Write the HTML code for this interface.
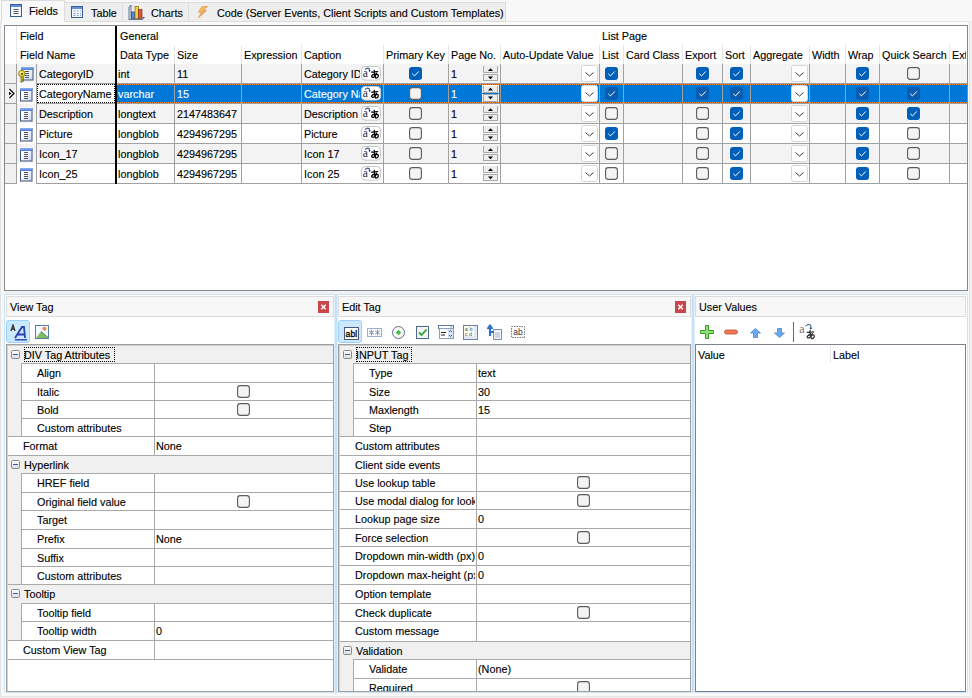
<!DOCTYPE html><html><head><meta charset="utf-8"><style>
html,body{margin:0;padding:0;}
body{width:972px;height:698px;position:relative;overflow:hidden;background:#f0f0f0;font-family:"Liberation Sans", sans-serif;}
.a{position:absolute;}
.t{white-space:nowrap;-webkit-text-stroke:0.12px currentColor;}
</style></head><body>
<div class="a" style="left:0px;top:0px;width:972px;height:21px;background:#f8f8f8;"></div>
<div class="a" style="left:0px;top:21px;width:970px;height:1px;background:#e4e4e4;"></div>
<div class="a" style="left:1px;top:22px;width:968px;height:3px;background:#fbfbfb;"></div>
<div class="a" style="left:1px;top:0px;width:64px;height:22px;background:#f9f9f9;box-sizing:border-box;border:1px solid #dcdcdc;border-bottom:none;"></div>
<div class="a" style="left:65px;top:2px;width:58px;height:20px;background:#eeeeee;box-sizing:border-box;border:1px solid #dcdcdc;border-left:none;border-bottom:none;"></div>
<div class="a" style="left:123px;top:2px;width:66px;height:20px;background:#eeeeee;box-sizing:border-box;border:1px solid #dcdcdc;border-left:none;border-bottom:none;"></div>
<div class="a" style="left:189px;top:2px;width:317px;height:20px;background:#eeeeee;box-sizing:border-box;border:1px solid #dcdcdc;border-left:none;border-bottom:none;"></div>
<div class="a" style="left:65px;top:21px;width:441px;height:1px;background:#dcdcdc;"></div>
<svg class="a" style="left:10px;top:4px" width="12" height="13" viewBox="0 0 12 13"><rect x="0.5" y="0.5" width="11" height="12" fill="#f4f7fd" stroke="#3c5a8e"/><rect x="1" y="1" width="10" height="2" fill="#5f8fe0"/><path d="M3.5 5.5H8.5M3.5 7.5H8.5M3.5 9.5H8.5" stroke="#555"/></svg>
<div class="a t" style="left:29px;top:4.76px;line-height:13px;font-size:10.8px;color:#000;">Fields</div>
<svg class="a" style="left:71px;top:6px" width="12" height="12" viewBox="0 0 12 12"><rect x="0.5" y="0.5" width="11" height="11" fill="#f4f7fd" stroke="#3c5a8e"/><rect x="1" y="1" width="10" height="2" fill="#5f8fe0"/><path d="M2.5 5H4.5M6 5H7.5M9 5H10M2.5 7.5H4.5M6 7.5H7.5M9 7.5H10M2.5 9.5H4.5M6 9.5H7.5M9 9.5H10" stroke="#7a9ad0"/></svg>
<div class="a t" style="left:91px;top:6.76px;line-height:13px;font-size:10.8px;color:#000;">Table</div>
<svg class="a" style="left:128px;top:4px" width="18" height="17" viewBox="0 0 18 17"><path d="M1 15.5 L3 13.5 H16.5 L14.5 15.5Z" fill="#dfe6f2" stroke="#3c5478" stroke-width="0.8"/><path d="M1 15.5 V3 L3 1 V13.5" fill="#e8eef8" stroke="#3c5478" stroke-width="0.8"/><rect x="3.5" y="8" width="3.5" height="6.5" fill="#4f86d8" stroke="#23457a" stroke-width="0.7"/><rect x="7" y="2.5" width="3.5" height="12" fill="#f2d23a" stroke="#8a6a10" stroke-width="0.7"/><rect x="10.5" y="5.5" width="3.5" height="9" fill="#e0543a" stroke="#80301a" stroke-width="0.7"/></svg>
<div class="a t" style="left:151px;top:6.76px;line-height:13px;font-size:10.8px;color:#000;">Charts</div>
<svg class="a" style="left:197px;top:6px" width="11" height="12" viewBox="0 0 11 12"><defs><linearGradient id="lg" x1="0" y1="0" x2="1" y2="1"><stop offset="0" stop-color="#fbe35a"/><stop offset="1" stop-color="#ec6a6a"/></linearGradient></defs><path d="M5 0.3 L10.5 0.3 L6.5 4.6 L9.5 4.6 L1.5 11.7 L4.3 6.2 L1.3 6.2Z" fill="url(#lg)" stroke="#d89040" stroke-width="0.6"/></svg>
<div class="a t" style="left:217px;top:6.76px;line-height:13px;font-size:10.8px;color:#000;">Code (Server Events, Client Scripts and Custom Templates)</div>
<div class="a" style="left:4px;top:25px;width:964px;height:266px;background:#ffffff;box-sizing:border-box;border:1px solid #828790;"></div>
<div class="a" style="left:5px;top:64px;width:11px;height:19px;background:#f0f0f0;"></div>
<div class="a" style="left:17px;top:64px;width:99px;height:19px;background:#f3f3f3;"></div>
<div class="a" style="left:117px;top:64px;width:850px;height:19px;background:#f3f3f3;"></div>
<div class="a" style="left:5px;top:83px;width:12px;height:1px;background:#a0a0a0;"></div>
<div class="a" style="left:36px;top:83px;width:931px;height:1px;background:#a0a0a0;"></div>
<div class="a" style="left:5px;top:84px;width:11px;height:19px;background:#f0f0f0;"></div>
<div class="a" style="left:17px;top:84px;width:19px;height:19px;background:#f9f9f9;"></div>
<div class="a" style="left:37px;top:84px;width:78px;height:19px;background:#ffffff;"></div>
<div class="a" style="left:117px;top:84px;width:850px;height:19px;background:#0078d7;"></div>
<div class="a" style="left:5px;top:103px;width:12px;height:1px;background:#a0a0a0;"></div>
<div class="a" style="left:36px;top:103px;width:931px;height:1px;background:#a0a0a0;"></div>
<div class="a" style="left:5px;top:104px;width:11px;height:19px;background:#f0f0f0;"></div>
<div class="a" style="left:17px;top:104px;width:99px;height:19px;background:#f3f3f3;"></div>
<div class="a" style="left:117px;top:104px;width:850px;height:19px;background:#f3f3f3;"></div>
<div class="a" style="left:5px;top:123px;width:12px;height:1px;background:#a0a0a0;"></div>
<div class="a" style="left:36px;top:123px;width:931px;height:1px;background:#a0a0a0;"></div>
<div class="a" style="left:5px;top:124px;width:11px;height:19px;background:#f0f0f0;"></div>
<div class="a" style="left:17px;top:124px;width:99px;height:19px;background:#ffffff;"></div>
<div class="a" style="left:117px;top:124px;width:850px;height:19px;background:#ffffff;"></div>
<div class="a" style="left:5px;top:143px;width:12px;height:1px;background:#a0a0a0;"></div>
<div class="a" style="left:36px;top:143px;width:931px;height:1px;background:#a0a0a0;"></div>
<div class="a" style="left:5px;top:144px;width:11px;height:19px;background:#f0f0f0;"></div>
<div class="a" style="left:17px;top:144px;width:99px;height:19px;background:#f3f3f3;"></div>
<div class="a" style="left:117px;top:144px;width:850px;height:19px;background:#f3f3f3;"></div>
<div class="a" style="left:5px;top:163px;width:12px;height:1px;background:#a0a0a0;"></div>
<div class="a" style="left:36px;top:163px;width:931px;height:1px;background:#a0a0a0;"></div>
<div class="a" style="left:5px;top:164px;width:11px;height:19px;background:#f0f0f0;"></div>
<div class="a" style="left:17px;top:164px;width:99px;height:19px;background:#ffffff;"></div>
<div class="a" style="left:117px;top:164px;width:850px;height:19px;background:#ffffff;"></div>
<div class="a" style="left:5px;top:183px;width:12px;height:1px;background:#a0a0a0;"></div>
<div class="a" style="left:36px;top:183px;width:931px;height:1px;background:#a0a0a0;"></div>
<div class="a" style="left:16px;top:45px;width:1px;height:19px;background:#e6e6e6;"></div>
<div class="a" style="left:174px;top:45px;width:1px;height:19px;background:#e6e6e6;"></div>
<div class="a" style="left:241px;top:45px;width:1px;height:19px;background:#e6e6e6;"></div>
<div class="a" style="left:301px;top:45px;width:1px;height:19px;background:#e6e6e6;"></div>
<div class="a" style="left:383px;top:45px;width:1px;height:19px;background:#e6e6e6;"></div>
<div class="a" style="left:448px;top:45px;width:1px;height:19px;background:#e6e6e6;"></div>
<div class="a" style="left:500px;top:45px;width:1px;height:19px;background:#e6e6e6;"></div>
<div class="a" style="left:599px;top:45px;width:1px;height:19px;background:#e6e6e6;"></div>
<div class="a" style="left:623px;top:45px;width:1px;height:19px;background:#e6e6e6;"></div>
<div class="a" style="left:682px;top:45px;width:1px;height:19px;background:#e6e6e6;"></div>
<div class="a" style="left:722px;top:45px;width:1px;height:19px;background:#e6e6e6;"></div>
<div class="a" style="left:750px;top:45px;width:1px;height:19px;background:#e6e6e6;"></div>
<div class="a" style="left:809px;top:45px;width:1px;height:19px;background:#e6e6e6;"></div>
<div class="a" style="left:845px;top:45px;width:1px;height:19px;background:#e6e6e6;"></div>
<div class="a" style="left:879px;top:45px;width:1px;height:19px;background:#e6e6e6;"></div>
<div class="a" style="left:949px;top:45px;width:1px;height:19px;background:#e6e6e6;"></div>
<div class="a" style="left:16px;top:26px;width:1px;height:38px;background:#e6e6e6;"></div>
<div class="a" style="left:16px;top:64px;width:1px;height:120px;background:#a0a0a0;"></div>
<div class="a" style="left:36px;top:64px;width:1px;height:120px;background:#a0a0a0;"></div>
<div class="a" style="left:174px;top:64px;width:1px;height:120px;background:#a0a0a0;"></div>
<div class="a" style="left:241px;top:64px;width:1px;height:120px;background:#a0a0a0;"></div>
<div class="a" style="left:301px;top:64px;width:1px;height:120px;background:#a0a0a0;"></div>
<div class="a" style="left:383px;top:64px;width:1px;height:120px;background:#a0a0a0;"></div>
<div class="a" style="left:448px;top:64px;width:1px;height:120px;background:#a0a0a0;"></div>
<div class="a" style="left:500px;top:64px;width:1px;height:120px;background:#a0a0a0;"></div>
<div class="a" style="left:599px;top:64px;width:1px;height:120px;background:#a0a0a0;"></div>
<div class="a" style="left:623px;top:64px;width:1px;height:120px;background:#a0a0a0;"></div>
<div class="a" style="left:682px;top:64px;width:1px;height:120px;background:#a0a0a0;"></div>
<div class="a" style="left:722px;top:64px;width:1px;height:120px;background:#a0a0a0;"></div>
<div class="a" style="left:750px;top:64px;width:1px;height:120px;background:#a0a0a0;"></div>
<div class="a" style="left:809px;top:64px;width:1px;height:120px;background:#a0a0a0;"></div>
<div class="a" style="left:845px;top:64px;width:1px;height:120px;background:#a0a0a0;"></div>
<div class="a" style="left:879px;top:64px;width:1px;height:120px;background:#a0a0a0;"></div>
<div class="a" style="left:949px;top:64px;width:1px;height:120px;background:#a0a0a0;"></div>
<div class="a" style="left:115px;top:26px;width:2px;height:158px;background:#000;"></div>
<div class="a" style="left:117px;top:84px;width:850px;height:0;border-top:1px dotted #ff8c1a;"></div>
<div class="a" style="left:117px;top:102px;width:850px;height:0;border-top:1px dotted #ff8c1a;"></div>
<div class="a" style="left:37px;top:84px;width:76px;height:17px;border:1px dotted #000;"></div>
<div class="a t" style="left:20px;top:29.76px;line-height:13px;font-size:10.8px;color:#000;">Field</div>
<div class="a t" style="left:120px;top:29.76px;line-height:13px;font-size:10.8px;color:#000;">General</div>
<div class="a t" style="left:602px;top:29.76px;line-height:13px;font-size:10.8px;color:#000;">List Page</div>
<div class="a t" style="left:20px;top:48.76px;line-height:13px;font-size:10.8px;color:#000;">Field Name</div>
<div class="a t" style="left:120px;top:48.76px;line-height:13px;font-size:10.8px;color:#000;">Data Type</div>
<div class="a t" style="left:177px;top:48.76px;line-height:13px;font-size:10.8px;color:#000;">Size</div>
<div class="a t" style="left:244px;top:48.76px;line-height:13px;font-size:10.8px;color:#000;">Expression</div>
<div class="a t" style="left:304px;top:48.76px;line-height:13px;font-size:10.8px;color:#000;">Caption</div>
<div class="a t" style="left:386px;top:48.76px;line-height:13px;font-size:10.8px;color:#000;">Primary Key</div>
<div class="a t" style="left:451px;top:48.76px;line-height:13px;font-size:10.8px;color:#000;">Page No.</div>
<div class="a t" style="left:503px;top:48.76px;line-height:13px;font-size:10.8px;color:#000;">Auto-Update Value</div>
<div class="a t" style="left:602px;top:48.76px;line-height:13px;font-size:10.8px;color:#000;">List</div>
<div class="a t" style="left:626px;top:48.76px;line-height:13px;font-size:10.8px;color:#000;">Card Class</div>
<div class="a t" style="left:685px;top:48.76px;line-height:13px;font-size:10.8px;color:#000;">Export</div>
<div class="a t" style="left:725px;top:48.76px;line-height:13px;font-size:10.8px;color:#000;">Sort</div>
<div class="a t" style="left:753px;top:48.76px;line-height:13px;font-size:10.8px;color:#000;">Aggregate</div>
<div class="a t" style="left:812px;top:48.76px;line-height:13px;font-size:10.8px;color:#000;">Width</div>
<div class="a t" style="left:848px;top:48.76px;line-height:13px;font-size:10.8px;color:#000;">Wrap</div>
<div class="a t" style="left:882px;top:48.76px;line-height:13px;font-size:10.8px;color:#000;">Quick Search</div>
<div class="a t" style="left:952px;top:48.76px;line-height:13px;font-size:10.8px;color:#000;width:14px;overflow:hidden;">Ext</div>
<svg class="a" style="left:21px;top:67px" width="13" height="14" viewBox="0 0 13 14"><defs><linearGradient id="fg" x1="0" y1="0" x2="1" y2="1"><stop offset="0.3" stop-color="#ffffff"/><stop offset="1" stop-color="#c4d4f0"/></linearGradient><linearGradient id="tb" x1="0" y1="0" x2="0" y2="1"><stop offset="0" stop-color="#8fb4f4"/><stop offset="1" stop-color="#4a7ad8"/></linearGradient></defs><rect x="0.5" y="0.5" width="11.5" height="12.5" fill="url(#fg)" stroke="#3d5272"/><rect x="0" y="0" width="12.5" height="3" fill="url(#tb)"/><path d="M4 4.5H8M4 6.5H8M4 8.5H8M4 10.5H8" stroke="#555" stroke-width="1"/></svg>
<svg class="a" style="left:18px;top:70px" width="9" height="13" viewBox="0 0 9 13"><path d="M3 6.5 V12.5 L4.5 11.5 L6 11 L4.5 10.2 L6 9.3 L4.5 8.6 L6 7.8 L5 6.5Z" fill="#d4cc10" stroke="#6a5200" stroke-width="0.7"/><circle cx="3.8" cy="3.6" r="3.2" fill="#e4dc20" stroke="#7a6400" stroke-width="0.7"/><circle cx="3.2" cy="3" r="1.4" fill="#f8f0a0"/><circle cx="4" cy="3.8" r="0.9" fill="#111"/></svg>
<div class="a t" style="left:39px;top:67.76px;line-height:13px;font-size:10.8px;color:#000;">CategoryID</div>
<div class="a t" style="left:118px;top:67.76px;line-height:13px;font-size:10.8px;color:#000;">int</div>
<div class="a t" style="left:177px;top:67.76px;line-height:13px;font-size:10.8px;color:#000;">11</div>
<div class="a t" style="left:304px;top:67.76px;line-height:13px;font-size:10.8px;color:#000;width:56px;overflow:hidden;">Category ID</div>
<svg class="a" style="left:361px;top:66px" width="20" height="15" viewBox="0 0 20 15"><rect x="0.5" y="0.5" width="19" height="13.6" rx="3.5" fill="#fff" stroke="#c8c8c8"/><text x="1.8" y="11" font-family="Liberation Serif" font-size="11.5" fill="#222">a</text><path d="M4.2 3.6 Q6 1.4 8.2 2.6 L8.6 5" stroke="#30508f" stroke-width="1.1" fill="none"/><path d="M7.3 4.6 L8.6 6.2 L9.9 4.6Z" fill="#30508f"/><g transform="translate(9.6,3.8) scale(0.86)"><path d="M1.2 2.6 L8.3 2.1 M4.2 0.6 Q3.9 5 5.6 9 M7 4.2 Q5.2 8.8 2.6 8.8 Q0.9 8.8 1.3 7 Q2.2 5.1 5.8 5 Q9.2 5 9 7.3 Q8.7 9.4 6.2 9.7" stroke="#000" stroke-width="1.45" fill="none" stroke-linecap="round"/></g></svg>
<svg class="a" style="left:409px;top:67px" width="13" height="13" viewBox="0 0 13 13"><rect x="0" y="0" width="13" height="13" rx="3" fill="#005fb8"/><path d="M3.3 6.8 L5.5 8.9 L9.8 4.4" stroke="#fff" stroke-width="1" fill="none"/></svg>
<div class="a t" style="left:451px;top:67.76px;line-height:13px;font-size:10.8px;color:#000;">1</div>
<svg class="a" style="left:483px;top:66px" width="15" height="15" viewBox="0 0 15 15"><path d="M0.5 0 V6.5 H14.5 V0" fill="#ededed" stroke="#a8a8a8"/><rect x="0.5" y="8.5" width="14" height="6" fill="#ededed" stroke="#a8a8a8"/><path d="M5 5 L7.5 2.3 L10 5Z" fill="#000"/><path d="M5 10.5 L7.5 13.2 L10 10.5Z" fill="#000"/></svg>
<svg class="a" style="left:581px;top:65px" width="17" height="17" viewBox="0 0 17 17"><rect x="0.5" y="0.5" width="16" height="16" rx="2" fill="#fff" stroke="#d6d6d6"/><path d="M4.5 7.5 L8.5 11 L12.5 7.5" stroke="#3a3a3a" stroke-width="1" fill="none"/></svg>
<svg class="a" style="left:605px;top:67px" width="13" height="13" viewBox="0 0 13 13"><rect x="0" y="0" width="13" height="13" rx="3" fill="#005fb8"/><path d="M3.3 6.8 L5.5 8.9 L9.8 4.4" stroke="#fff" stroke-width="1" fill="none"/></svg>
<svg class="a" style="left:696px;top:67px" width="13" height="13" viewBox="0 0 13 13"><rect x="0" y="0" width="13" height="13" rx="3" fill="#005fb8"/><path d="M3.3 6.8 L5.5 8.9 L9.8 4.4" stroke="#fff" stroke-width="1" fill="none"/></svg>
<svg class="a" style="left:730px;top:67px" width="13" height="13" viewBox="0 0 13 13"><rect x="0" y="0" width="13" height="13" rx="3" fill="#005fb8"/><path d="M3.3 6.8 L5.5 8.9 L9.8 4.4" stroke="#fff" stroke-width="1" fill="none"/></svg>
<svg class="a" style="left:791px;top:65px" width="17" height="17" viewBox="0 0 17 17"><rect x="0.5" y="0.5" width="16" height="16" rx="2" fill="#fff" stroke="#d6d6d6"/><path d="M4.5 7.5 L8.5 11 L12.5 7.5" stroke="#3a3a3a" stroke-width="1" fill="none"/></svg>
<svg class="a" style="left:856px;top:67px" width="13" height="13" viewBox="0 0 13 13"><rect x="0" y="0" width="13" height="13" rx="3" fill="#005fb8"/><path d="M3.3 6.8 L5.5 8.9 L9.8 4.4" stroke="#fff" stroke-width="1" fill="none"/></svg>
<svg class="a" style="left:907px;top:67px" width="13" height="13" viewBox="0 0 13 13"><rect x="0.6" y="0.6" width="11.8" height="11.8" rx="2.6" fill="#f4f4f4" stroke="#5c5c5c" stroke-width="1.1"/></svg>
<svg class="a" style="left:8px;top:88px" width="8" height="11" viewBox="0 0 8 11"><path d="M1.5 1 L6 5.5 L1.5 10" fill="none" stroke="#000" stroke-width="1.1"/><path d="M1 3.8 L3.4 5.5 L1 7.2Z" fill="#000"/></svg>
<svg class="a" style="left:20px;top:88px" width="13" height="14" viewBox="0 0 13 14"><defs><linearGradient id="fg" x1="0" y1="0" x2="1" y2="1"><stop offset="0.3" stop-color="#ffffff"/><stop offset="1" stop-color="#c4d4f0"/></linearGradient><linearGradient id="tb" x1="0" y1="0" x2="0" y2="1"><stop offset="0" stop-color="#8fb4f4"/><stop offset="1" stop-color="#4a7ad8"/></linearGradient></defs><rect x="0.5" y="0.5" width="11.5" height="12.5" fill="url(#fg)" stroke="#3d5272"/><rect x="0" y="0" width="12.5" height="3" fill="url(#tb)"/><path d="M4 4.5H8M4 6.5H8M4 8.5H8M4 10.5H8" stroke="#555" stroke-width="1"/></svg>
<div class="a t" style="left:39px;top:87.76px;line-height:13px;font-size:10.8px;color:#000;">CategoryName</div>
<div class="a t" style="left:118px;top:87.76px;line-height:13px;font-size:10.8px;color:#fff;">varchar</div>
<div class="a t" style="left:177px;top:87.76px;line-height:13px;font-size:10.8px;color:#fff;">15</div>
<div class="a t" style="left:304px;top:87.76px;line-height:13px;font-size:10.8px;color:#fff;width:56px;overflow:hidden;">Category Name</div>
<svg class="a" style="left:361px;top:86px" width="20" height="15" viewBox="0 0 20 15"><rect x="0.5" y="0.5" width="19" height="13.6" rx="3.5" fill="#fff" stroke="#c8c8c8"/><text x="1.8" y="11" font-family="Liberation Serif" font-size="11.5" fill="#222">a</text><path d="M4.2 3.6 Q6 1.4 8.2 2.6 L8.6 5" stroke="#30508f" stroke-width="1.1" fill="none"/><path d="M7.3 4.6 L8.6 6.2 L9.9 4.6Z" fill="#30508f"/><g transform="translate(9.6,3.8) scale(0.86)"><path d="M1.2 2.6 L8.3 2.1 M4.2 0.6 Q3.9 5 5.6 9 M7 4.2 Q5.2 8.8 2.6 8.8 Q0.9 8.8 1.3 7 Q2.2 5.1 5.8 5 Q9.2 5 9 7.3 Q8.7 9.4 6.2 9.7" stroke="#000" stroke-width="1.45" fill="none" stroke-linecap="round"/></g></svg>
<svg class="a" style="left:409px;top:87px" width="13" height="13" viewBox="0 0 13 13"><rect x="0.6" y="0.6" width="11.8" height="11.8" rx="2.6" fill="#f4f4f4" stroke="#5c5c5c" stroke-width="1.1"/></svg>
<div class="a t" style="left:451px;top:87.76px;line-height:13px;font-size:10.8px;color:#fff;">1</div>
<div class="a" style="left:482px;top:85px;width:17px;height:17px;background:#fdfdfd;"></div>
<div class="a" style="left:482px;top:93px;width:17px;height:1px;background:#0078d7;"></div>
<svg class="a" style="left:483px;top:85px" width="15" height="17" viewBox="0 0 15 17"><path d="M0.5 1 V7.5 H14.5 V1" fill="#ececec" stroke="#a8a8a8"/><rect x="0.5" y="9.5" width="14" height="7" fill="#ececec" stroke="#a8a8a8"/><path d="M5 5.5 L7.5 2.8 L10 5.5Z" fill="#000"/><path d="M5 11.5 L7.5 14.2 L10 11.5Z" fill="#000"/></svg>
<svg class="a" style="left:581px;top:85px" width="17" height="17" viewBox="0 0 17 17"><rect x="0.5" y="0.5" width="16" height="16" rx="2" fill="#fff" stroke="#d6d6d6"/><path d="M4.5 7.5 L8.5 11 L12.5 7.5" stroke="#3a3a3a" stroke-width="1" fill="none"/></svg>
<svg class="a" style="left:605px;top:87px" width="13" height="13" viewBox="0 0 13 13"><rect x="0" y="0" width="13" height="13" rx="3" fill="#0a5cb0"/><path d="M3.3 6.8 L5.5 8.9 L9.8 4.4" stroke="#fff" stroke-width="1" fill="none"/></svg>
<svg class="a" style="left:696px;top:87px" width="13" height="13" viewBox="0 0 13 13"><rect x="0" y="0" width="13" height="13" rx="3" fill="#0a5cb0"/><path d="M3.3 6.8 L5.5 8.9 L9.8 4.4" stroke="#fff" stroke-width="1" fill="none"/></svg>
<svg class="a" style="left:730px;top:87px" width="13" height="13" viewBox="0 0 13 13"><rect x="0" y="0" width="13" height="13" rx="3" fill="#0a5cb0"/><path d="M3.3 6.8 L5.5 8.9 L9.8 4.4" stroke="#fff" stroke-width="1" fill="none"/></svg>
<svg class="a" style="left:791px;top:85px" width="17" height="17" viewBox="0 0 17 17"><rect x="0.5" y="0.5" width="16" height="16" rx="2" fill="#fff" stroke="#d6d6d6"/><path d="M4.5 7.5 L8.5 11 L12.5 7.5" stroke="#3a3a3a" stroke-width="1" fill="none"/></svg>
<svg class="a" style="left:856px;top:87px" width="13" height="13" viewBox="0 0 13 13"><rect x="0" y="0" width="13" height="13" rx="3" fill="#0a5cb0"/><path d="M3.3 6.8 L5.5 8.9 L9.8 4.4" stroke="#fff" stroke-width="1" fill="none"/></svg>
<svg class="a" style="left:907px;top:87px" width="13" height="13" viewBox="0 0 13 13"><rect x="0" y="0" width="13" height="13" rx="3" fill="#0a5cb0"/><path d="M3.3 6.8 L5.5 8.9 L9.8 4.4" stroke="#fff" stroke-width="1" fill="none"/></svg>
<svg class="a" style="left:20px;top:108px" width="13" height="14" viewBox="0 0 13 14"><defs><linearGradient id="fg" x1="0" y1="0" x2="1" y2="1"><stop offset="0.3" stop-color="#ffffff"/><stop offset="1" stop-color="#c4d4f0"/></linearGradient><linearGradient id="tb" x1="0" y1="0" x2="0" y2="1"><stop offset="0" stop-color="#8fb4f4"/><stop offset="1" stop-color="#4a7ad8"/></linearGradient></defs><rect x="0.5" y="0.5" width="11.5" height="12.5" fill="url(#fg)" stroke="#3d5272"/><rect x="0" y="0" width="12.5" height="3" fill="url(#tb)"/><path d="M4 4.5H8M4 6.5H8M4 8.5H8M4 10.5H8" stroke="#555" stroke-width="1"/></svg>
<div class="a t" style="left:39px;top:107.76px;line-height:13px;font-size:10.8px;color:#000;">Description</div>
<div class="a t" style="left:118px;top:107.76px;line-height:13px;font-size:10.8px;color:#000;">longtext</div>
<div class="a t" style="left:177px;top:107.76px;line-height:13px;font-size:10.8px;color:#000;">2147483647</div>
<div class="a t" style="left:304px;top:107.76px;line-height:13px;font-size:10.8px;color:#000;width:56px;overflow:hidden;">Description</div>
<svg class="a" style="left:361px;top:106px" width="20" height="15" viewBox="0 0 20 15"><rect x="0.5" y="0.5" width="19" height="13.6" rx="3.5" fill="#fff" stroke="#c8c8c8"/><text x="1.8" y="11" font-family="Liberation Serif" font-size="11.5" fill="#222">a</text><path d="M4.2 3.6 Q6 1.4 8.2 2.6 L8.6 5" stroke="#30508f" stroke-width="1.1" fill="none"/><path d="M7.3 4.6 L8.6 6.2 L9.9 4.6Z" fill="#30508f"/><g transform="translate(9.6,3.8) scale(0.86)"><path d="M1.2 2.6 L8.3 2.1 M4.2 0.6 Q3.9 5 5.6 9 M7 4.2 Q5.2 8.8 2.6 8.8 Q0.9 8.8 1.3 7 Q2.2 5.1 5.8 5 Q9.2 5 9 7.3 Q8.7 9.4 6.2 9.7" stroke="#000" stroke-width="1.45" fill="none" stroke-linecap="round"/></g></svg>
<svg class="a" style="left:409px;top:107px" width="13" height="13" viewBox="0 0 13 13"><rect x="0.6" y="0.6" width="11.8" height="11.8" rx="2.6" fill="#f4f4f4" stroke="#5c5c5c" stroke-width="1.1"/></svg>
<div class="a t" style="left:451px;top:107.76px;line-height:13px;font-size:10.8px;color:#000;">1</div>
<svg class="a" style="left:483px;top:106px" width="15" height="15" viewBox="0 0 15 15"><path d="M0.5 0 V6.5 H14.5 V0" fill="#ededed" stroke="#a8a8a8"/><rect x="0.5" y="8.5" width="14" height="6" fill="#ededed" stroke="#a8a8a8"/><path d="M5 5 L7.5 2.3 L10 5Z" fill="#000"/><path d="M5 10.5 L7.5 13.2 L10 10.5Z" fill="#000"/></svg>
<svg class="a" style="left:581px;top:105px" width="17" height="17" viewBox="0 0 17 17"><rect x="0.5" y="0.5" width="16" height="16" rx="2" fill="#fff" stroke="#d6d6d6"/><path d="M4.5 7.5 L8.5 11 L12.5 7.5" stroke="#3a3a3a" stroke-width="1" fill="none"/></svg>
<svg class="a" style="left:605px;top:107px" width="13" height="13" viewBox="0 0 13 13"><rect x="0.6" y="0.6" width="11.8" height="11.8" rx="2.6" fill="#f4f4f4" stroke="#5c5c5c" stroke-width="1.1"/></svg>
<svg class="a" style="left:696px;top:107px" width="13" height="13" viewBox="0 0 13 13"><rect x="0.6" y="0.6" width="11.8" height="11.8" rx="2.6" fill="#f4f4f4" stroke="#5c5c5c" stroke-width="1.1"/></svg>
<svg class="a" style="left:730px;top:107px" width="13" height="13" viewBox="0 0 13 13"><rect x="0" y="0" width="13" height="13" rx="3" fill="#005fb8"/><path d="M3.3 6.8 L5.5 8.9 L9.8 4.4" stroke="#fff" stroke-width="1" fill="none"/></svg>
<svg class="a" style="left:791px;top:105px" width="17" height="17" viewBox="0 0 17 17"><rect x="0.5" y="0.5" width="16" height="16" rx="2" fill="#fff" stroke="#d6d6d6"/><path d="M4.5 7.5 L8.5 11 L12.5 7.5" stroke="#3a3a3a" stroke-width="1" fill="none"/></svg>
<svg class="a" style="left:856px;top:107px" width="13" height="13" viewBox="0 0 13 13"><rect x="0" y="0" width="13" height="13" rx="3" fill="#005fb8"/><path d="M3.3 6.8 L5.5 8.9 L9.8 4.4" stroke="#fff" stroke-width="1" fill="none"/></svg>
<svg class="a" style="left:907px;top:107px" width="13" height="13" viewBox="0 0 13 13"><rect x="0" y="0" width="13" height="13" rx="3" fill="#005fb8"/><path d="M3.3 6.8 L5.5 8.9 L9.8 4.4" stroke="#fff" stroke-width="1" fill="none"/></svg>
<svg class="a" style="left:20px;top:128px" width="13" height="14" viewBox="0 0 13 14"><defs><linearGradient id="fg" x1="0" y1="0" x2="1" y2="1"><stop offset="0.3" stop-color="#ffffff"/><stop offset="1" stop-color="#c4d4f0"/></linearGradient><linearGradient id="tb" x1="0" y1="0" x2="0" y2="1"><stop offset="0" stop-color="#8fb4f4"/><stop offset="1" stop-color="#4a7ad8"/></linearGradient></defs><rect x="0.5" y="0.5" width="11.5" height="12.5" fill="url(#fg)" stroke="#3d5272"/><rect x="0" y="0" width="12.5" height="3" fill="url(#tb)"/><path d="M4 4.5H8M4 6.5H8M4 8.5H8M4 10.5H8" stroke="#555" stroke-width="1"/></svg>
<div class="a t" style="left:39px;top:127.76px;line-height:13px;font-size:10.8px;color:#000;">Picture</div>
<div class="a t" style="left:118px;top:127.76px;line-height:13px;font-size:10.8px;color:#000;">longblob</div>
<div class="a t" style="left:177px;top:127.76px;line-height:13px;font-size:10.8px;color:#000;">4294967295</div>
<div class="a t" style="left:304px;top:127.76px;line-height:13px;font-size:10.8px;color:#000;width:56px;overflow:hidden;">Picture</div>
<svg class="a" style="left:361px;top:126px" width="20" height="15" viewBox="0 0 20 15"><rect x="0.5" y="0.5" width="19" height="13.6" rx="3.5" fill="#fff" stroke="#c8c8c8"/><text x="1.8" y="11" font-family="Liberation Serif" font-size="11.5" fill="#222">a</text><path d="M4.2 3.6 Q6 1.4 8.2 2.6 L8.6 5" stroke="#30508f" stroke-width="1.1" fill="none"/><path d="M7.3 4.6 L8.6 6.2 L9.9 4.6Z" fill="#30508f"/><g transform="translate(9.6,3.8) scale(0.86)"><path d="M1.2 2.6 L8.3 2.1 M4.2 0.6 Q3.9 5 5.6 9 M7 4.2 Q5.2 8.8 2.6 8.8 Q0.9 8.8 1.3 7 Q2.2 5.1 5.8 5 Q9.2 5 9 7.3 Q8.7 9.4 6.2 9.7" stroke="#000" stroke-width="1.45" fill="none" stroke-linecap="round"/></g></svg>
<svg class="a" style="left:409px;top:127px" width="13" height="13" viewBox="0 0 13 13"><rect x="0.6" y="0.6" width="11.8" height="11.8" rx="2.6" fill="#f4f4f4" stroke="#5c5c5c" stroke-width="1.1"/></svg>
<div class="a t" style="left:451px;top:127.76px;line-height:13px;font-size:10.8px;color:#000;">1</div>
<svg class="a" style="left:483px;top:126px" width="15" height="15" viewBox="0 0 15 15"><path d="M0.5 0 V6.5 H14.5 V0" fill="#ededed" stroke="#a8a8a8"/><rect x="0.5" y="8.5" width="14" height="6" fill="#ededed" stroke="#a8a8a8"/><path d="M5 5 L7.5 2.3 L10 5Z" fill="#000"/><path d="M5 10.5 L7.5 13.2 L10 10.5Z" fill="#000"/></svg>
<svg class="a" style="left:581px;top:125px" width="17" height="17" viewBox="0 0 17 17"><rect x="0.5" y="0.5" width="16" height="16" rx="2" fill="#fff" stroke="#d6d6d6"/><path d="M4.5 7.5 L8.5 11 L12.5 7.5" stroke="#3a3a3a" stroke-width="1" fill="none"/></svg>
<svg class="a" style="left:605px;top:127px" width="13" height="13" viewBox="0 0 13 13"><rect x="0" y="0" width="13" height="13" rx="3" fill="#005fb8"/><path d="M3.3 6.8 L5.5 8.9 L9.8 4.4" stroke="#fff" stroke-width="1" fill="none"/></svg>
<svg class="a" style="left:696px;top:127px" width="13" height="13" viewBox="0 0 13 13"><rect x="0.6" y="0.6" width="11.8" height="11.8" rx="2.6" fill="#f4f4f4" stroke="#5c5c5c" stroke-width="1.1"/></svg>
<svg class="a" style="left:730px;top:127px" width="13" height="13" viewBox="0 0 13 13"><rect x="0" y="0" width="13" height="13" rx="3" fill="#005fb8"/><path d="M3.3 6.8 L5.5 8.9 L9.8 4.4" stroke="#fff" stroke-width="1" fill="none"/></svg>
<svg class="a" style="left:791px;top:125px" width="17" height="17" viewBox="0 0 17 17"><rect x="0.5" y="0.5" width="16" height="16" rx="2" fill="#fff" stroke="#d6d6d6"/><path d="M4.5 7.5 L8.5 11 L12.5 7.5" stroke="#3a3a3a" stroke-width="1" fill="none"/></svg>
<svg class="a" style="left:856px;top:127px" width="13" height="13" viewBox="0 0 13 13"><rect x="0" y="0" width="13" height="13" rx="3" fill="#005fb8"/><path d="M3.3 6.8 L5.5 8.9 L9.8 4.4" stroke="#fff" stroke-width="1" fill="none"/></svg>
<svg class="a" style="left:907px;top:127px" width="13" height="13" viewBox="0 0 13 13"><rect x="0.6" y="0.6" width="11.8" height="11.8" rx="2.6" fill="#f4f4f4" stroke="#5c5c5c" stroke-width="1.1"/></svg>
<svg class="a" style="left:20px;top:148px" width="13" height="14" viewBox="0 0 13 14"><defs><linearGradient id="fg" x1="0" y1="0" x2="1" y2="1"><stop offset="0.3" stop-color="#ffffff"/><stop offset="1" stop-color="#c4d4f0"/></linearGradient><linearGradient id="tb" x1="0" y1="0" x2="0" y2="1"><stop offset="0" stop-color="#8fb4f4"/><stop offset="1" stop-color="#4a7ad8"/></linearGradient></defs><rect x="0.5" y="0.5" width="11.5" height="12.5" fill="url(#fg)" stroke="#3d5272"/><rect x="0" y="0" width="12.5" height="3" fill="url(#tb)"/><path d="M4 4.5H8M4 6.5H8M4 8.5H8M4 10.5H8" stroke="#555" stroke-width="1"/></svg>
<div class="a t" style="left:39px;top:147.76px;line-height:13px;font-size:10.8px;color:#000;">Icon_17</div>
<div class="a t" style="left:118px;top:147.76px;line-height:13px;font-size:10.8px;color:#000;">longblob</div>
<div class="a t" style="left:177px;top:147.76px;line-height:13px;font-size:10.8px;color:#000;">4294967295</div>
<div class="a t" style="left:304px;top:147.76px;line-height:13px;font-size:10.8px;color:#000;width:56px;overflow:hidden;">Icon 17</div>
<svg class="a" style="left:361px;top:146px" width="20" height="15" viewBox="0 0 20 15"><rect x="0.5" y="0.5" width="19" height="13.6" rx="3.5" fill="#fff" stroke="#c8c8c8"/><text x="1.8" y="11" font-family="Liberation Serif" font-size="11.5" fill="#222">a</text><path d="M4.2 3.6 Q6 1.4 8.2 2.6 L8.6 5" stroke="#30508f" stroke-width="1.1" fill="none"/><path d="M7.3 4.6 L8.6 6.2 L9.9 4.6Z" fill="#30508f"/><g transform="translate(9.6,3.8) scale(0.86)"><path d="M1.2 2.6 L8.3 2.1 M4.2 0.6 Q3.9 5 5.6 9 M7 4.2 Q5.2 8.8 2.6 8.8 Q0.9 8.8 1.3 7 Q2.2 5.1 5.8 5 Q9.2 5 9 7.3 Q8.7 9.4 6.2 9.7" stroke="#000" stroke-width="1.45" fill="none" stroke-linecap="round"/></g></svg>
<svg class="a" style="left:409px;top:147px" width="13" height="13" viewBox="0 0 13 13"><rect x="0.6" y="0.6" width="11.8" height="11.8" rx="2.6" fill="#f4f4f4" stroke="#5c5c5c" stroke-width="1.1"/></svg>
<div class="a t" style="left:451px;top:147.76px;line-height:13px;font-size:10.8px;color:#000;">1</div>
<svg class="a" style="left:483px;top:146px" width="15" height="15" viewBox="0 0 15 15"><path d="M0.5 0 V6.5 H14.5 V0" fill="#ededed" stroke="#a8a8a8"/><rect x="0.5" y="8.5" width="14" height="6" fill="#ededed" stroke="#a8a8a8"/><path d="M5 5 L7.5 2.3 L10 5Z" fill="#000"/><path d="M5 10.5 L7.5 13.2 L10 10.5Z" fill="#000"/></svg>
<svg class="a" style="left:581px;top:145px" width="17" height="17" viewBox="0 0 17 17"><rect x="0.5" y="0.5" width="16" height="16" rx="2" fill="#fff" stroke="#d6d6d6"/><path d="M4.5 7.5 L8.5 11 L12.5 7.5" stroke="#3a3a3a" stroke-width="1" fill="none"/></svg>
<svg class="a" style="left:605px;top:147px" width="13" height="13" viewBox="0 0 13 13"><rect x="0.6" y="0.6" width="11.8" height="11.8" rx="2.6" fill="#f4f4f4" stroke="#5c5c5c" stroke-width="1.1"/></svg>
<svg class="a" style="left:696px;top:147px" width="13" height="13" viewBox="0 0 13 13"><rect x="0.6" y="0.6" width="11.8" height="11.8" rx="2.6" fill="#f4f4f4" stroke="#5c5c5c" stroke-width="1.1"/></svg>
<svg class="a" style="left:730px;top:147px" width="13" height="13" viewBox="0 0 13 13"><rect x="0" y="0" width="13" height="13" rx="3" fill="#005fb8"/><path d="M3.3 6.8 L5.5 8.9 L9.8 4.4" stroke="#fff" stroke-width="1" fill="none"/></svg>
<svg class="a" style="left:791px;top:145px" width="17" height="17" viewBox="0 0 17 17"><rect x="0.5" y="0.5" width="16" height="16" rx="2" fill="#fff" stroke="#d6d6d6"/><path d="M4.5 7.5 L8.5 11 L12.5 7.5" stroke="#3a3a3a" stroke-width="1" fill="none"/></svg>
<svg class="a" style="left:856px;top:147px" width="13" height="13" viewBox="0 0 13 13"><rect x="0" y="0" width="13" height="13" rx="3" fill="#005fb8"/><path d="M3.3 6.8 L5.5 8.9 L9.8 4.4" stroke="#fff" stroke-width="1" fill="none"/></svg>
<svg class="a" style="left:907px;top:147px" width="13" height="13" viewBox="0 0 13 13"><rect x="0.6" y="0.6" width="11.8" height="11.8" rx="2.6" fill="#f4f4f4" stroke="#5c5c5c" stroke-width="1.1"/></svg>
<svg class="a" style="left:20px;top:168px" width="13" height="14" viewBox="0 0 13 14"><defs><linearGradient id="fg" x1="0" y1="0" x2="1" y2="1"><stop offset="0.3" stop-color="#ffffff"/><stop offset="1" stop-color="#c4d4f0"/></linearGradient><linearGradient id="tb" x1="0" y1="0" x2="0" y2="1"><stop offset="0" stop-color="#8fb4f4"/><stop offset="1" stop-color="#4a7ad8"/></linearGradient></defs><rect x="0.5" y="0.5" width="11.5" height="12.5" fill="url(#fg)" stroke="#3d5272"/><rect x="0" y="0" width="12.5" height="3" fill="url(#tb)"/><path d="M4 4.5H8M4 6.5H8M4 8.5H8M4 10.5H8" stroke="#555" stroke-width="1"/></svg>
<div class="a t" style="left:39px;top:167.76px;line-height:13px;font-size:10.8px;color:#000;">Icon_25</div>
<div class="a t" style="left:118px;top:167.76px;line-height:13px;font-size:10.8px;color:#000;">longblob</div>
<div class="a t" style="left:177px;top:167.76px;line-height:13px;font-size:10.8px;color:#000;">4294967295</div>
<div class="a t" style="left:304px;top:167.76px;line-height:13px;font-size:10.8px;color:#000;width:56px;overflow:hidden;">Icon 25</div>
<svg class="a" style="left:361px;top:166px" width="20" height="15" viewBox="0 0 20 15"><rect x="0.5" y="0.5" width="19" height="13.6" rx="3.5" fill="#fff" stroke="#c8c8c8"/><text x="1.8" y="11" font-family="Liberation Serif" font-size="11.5" fill="#222">a</text><path d="M4.2 3.6 Q6 1.4 8.2 2.6 L8.6 5" stroke="#30508f" stroke-width="1.1" fill="none"/><path d="M7.3 4.6 L8.6 6.2 L9.9 4.6Z" fill="#30508f"/><g transform="translate(9.6,3.8) scale(0.86)"><path d="M1.2 2.6 L8.3 2.1 M4.2 0.6 Q3.9 5 5.6 9 M7 4.2 Q5.2 8.8 2.6 8.8 Q0.9 8.8 1.3 7 Q2.2 5.1 5.8 5 Q9.2 5 9 7.3 Q8.7 9.4 6.2 9.7" stroke="#000" stroke-width="1.45" fill="none" stroke-linecap="round"/></g></svg>
<svg class="a" style="left:409px;top:167px" width="13" height="13" viewBox="0 0 13 13"><rect x="0.6" y="0.6" width="11.8" height="11.8" rx="2.6" fill="#f4f4f4" stroke="#5c5c5c" stroke-width="1.1"/></svg>
<div class="a t" style="left:451px;top:167.76px;line-height:13px;font-size:10.8px;color:#000;">1</div>
<svg class="a" style="left:483px;top:166px" width="15" height="15" viewBox="0 0 15 15"><path d="M0.5 0 V6.5 H14.5 V0" fill="#ededed" stroke="#a8a8a8"/><rect x="0.5" y="8.5" width="14" height="6" fill="#ededed" stroke="#a8a8a8"/><path d="M5 5 L7.5 2.3 L10 5Z" fill="#000"/><path d="M5 10.5 L7.5 13.2 L10 10.5Z" fill="#000"/></svg>
<svg class="a" style="left:581px;top:165px" width="17" height="17" viewBox="0 0 17 17"><rect x="0.5" y="0.5" width="16" height="16" rx="2" fill="#fff" stroke="#d6d6d6"/><path d="M4.5 7.5 L8.5 11 L12.5 7.5" stroke="#3a3a3a" stroke-width="1" fill="none"/></svg>
<svg class="a" style="left:605px;top:167px" width="13" height="13" viewBox="0 0 13 13"><rect x="0.6" y="0.6" width="11.8" height="11.8" rx="2.6" fill="#f4f4f4" stroke="#5c5c5c" stroke-width="1.1"/></svg>
<svg class="a" style="left:696px;top:167px" width="13" height="13" viewBox="0 0 13 13"><rect x="0.6" y="0.6" width="11.8" height="11.8" rx="2.6" fill="#f4f4f4" stroke="#5c5c5c" stroke-width="1.1"/></svg>
<svg class="a" style="left:730px;top:167px" width="13" height="13" viewBox="0 0 13 13"><rect x="0" y="0" width="13" height="13" rx="3" fill="#005fb8"/><path d="M3.3 6.8 L5.5 8.9 L9.8 4.4" stroke="#fff" stroke-width="1" fill="none"/></svg>
<svg class="a" style="left:791px;top:165px" width="17" height="17" viewBox="0 0 17 17"><rect x="0.5" y="0.5" width="16" height="16" rx="2" fill="#fff" stroke="#d6d6d6"/><path d="M4.5 7.5 L8.5 11 L12.5 7.5" stroke="#3a3a3a" stroke-width="1" fill="none"/></svg>
<svg class="a" style="left:856px;top:167px" width="13" height="13" viewBox="0 0 13 13"><rect x="0" y="0" width="13" height="13" rx="3" fill="#005fb8"/><path d="M3.3 6.8 L5.5 8.9 L9.8 4.4" stroke="#fff" stroke-width="1" fill="none"/></svg>
<svg class="a" style="left:907px;top:167px" width="13" height="13" viewBox="0 0 13 13"><rect x="0.6" y="0.6" width="11.8" height="11.8" rx="2.6" fill="#f4f4f4" stroke="#5c5c5c" stroke-width="1.1"/></svg>
<div class="a" style="left:0px;top:22px;width:1px;height:676px;background:#e2e2e2;"></div>
<div class="a" style="left:1px;top:22px;width:3px;height:671px;background:#f7f7f7;"></div>
<div class="a" style="left:1px;top:693px;width:969px;height:3px;background:#f8f8f8;"></div>
<div class="a" style="left:0px;top:696px;width:971px;height:1px;background:#e6e6e6;"></div>
<div class="a" style="left:968px;top:22px;width:2px;height:674px;background:#f8f8f8;"></div>
<div class="a" style="left:969px;top:21px;width:1px;height:676px;background:#e4e4e4;"></div>
<div class="a" style="left:970px;top:21px;width:2px;height:677px;background:#f0f0f0;"></div>
<div class="a" style="left:4px;top:291px;width:964px;height:3px;background:#f1f1f1;"></div>
<div class="a" style="left:4px;top:294px;width:964px;height:399px;background:#cce4f7;border-radius:2px;"></div>
<div class="a" style="left:5px;top:295px;width:962px;height:397px;background:#ffffff;"></div>
<div class="a" style="left:334px;top:294px;width:4px;height:399px;background:#e3f0fb;"></div>
<div class="a" style="left:335px;top:294px;width:2px;height:399px;background:#c6e1f7;"></div>
<div class="a" style="left:691px;top:294px;width:4px;height:399px;background:#e3f0fb;"></div>
<div class="a" style="left:692px;top:294px;width:2px;height:399px;background:#c6e1f7;"></div>
<div class="a" style="left:6px;top:296px;width:328px;height:21px;background:#f7f7f7;box-sizing:border-box;border:1px solid #dcdcdc;"></div>
<div class="a t" style="left:10px;top:300.76px;line-height:13px;font-size:10.8px;color:#000;">View Tag</div>
<svg class="a" style="left:318px;top:301px" width="11" height="12" viewBox="0 0 11 12"><rect width="11" height="12" fill="#c9474a"/><path d="M3.3 3.8 L7.7 8.2 M7.7 3.8 L3.3 8.2" stroke="#fff" stroke-width="1.5"/></svg>
<div class="a" style="left:338px;top:296px;width:353px;height:21px;background:#f7f7f7;box-sizing:border-box;border:1px solid #dcdcdc;"></div>
<div class="a t" style="left:342px;top:300.76px;line-height:13px;font-size:10.8px;color:#000;">Edit Tag</div>
<svg class="a" style="left:675px;top:301px" width="11" height="12" viewBox="0 0 11 12"><rect width="11" height="12" fill="#c9474a"/><path d="M3.3 3.8 L7.7 8.2 M7.7 3.8 L3.3 8.2" stroke="#fff" stroke-width="1.5"/></svg>
<div class="a" style="left:695px;top:296px;width:271px;height:21px;background:#f7f7f7;box-sizing:border-box;border:1px solid #dcdcdc;"></div>
<div class="a t" style="left:699px;top:300.76px;line-height:13px;font-size:10.8px;color:#000;">User Values</div>
<div class="a" style="left:6px;top:344px;width:328px;height:348px;background:#ffffff;box-sizing:border-box;border:1px solid #a0a0a0;"></div>
<div class="a" style="left:7px;top:345px;width:326px;height:18px;background:#f0f0f0;"></div>
<svg class="a" style="left:11px;top:350px" width="9" height="9" viewBox="0 0 9 9"><defs><linearGradient id="eg" x1="0" y1="0" x2="0" y2="1"><stop offset="0" stop-color="#fff"/><stop offset="1" stop-color="#dcdcdc"/></linearGradient></defs><rect x="0.5" y="0.5" width="8" height="8" rx="1.2" fill="url(#eg)" stroke="#8a8a8a"/><path d="M2 4.5 H7" stroke="#3b5aa6" stroke-width="1"/></svg>
<div class="a t" style="left:24px;top:348.76px;line-height:13px;font-size:10.8px;color:#000;">DIV Tag Attributes</div>
<div class="a" style="left:24px;top:347px;width:89px;height:13px;border:1px dotted #000;"></div>
<div class="a" style="left:7px;top:363px;width:14px;height:20px;background:#f0f0f0;"></div>
<div class="a" style="left:21px;top:363px;width:312px;height:1px;background:#a9a9a9;"></div>
<div class="a" style="left:154px;top:364px;width:1px;height:18px;background:#a9a9a9;"></div>
<div class="a" style="left:21px;top:364px;width:1px;height:19px;background:#a9a9a9;"></div>
<div class="a t" style="left:37px;top:366.76px;line-height:13px;font-size:10.8px;color:#000;width:116px;overflow:hidden;">Align</div>
<div class="a" style="left:7px;top:382px;width:14px;height:19px;background:#f0f0f0;"></div>
<div class="a" style="left:21px;top:382px;width:312px;height:1px;background:#a9a9a9;"></div>
<div class="a" style="left:154px;top:383px;width:1px;height:17px;background:#a9a9a9;"></div>
<div class="a" style="left:21px;top:383px;width:1px;height:18px;background:#a9a9a9;"></div>
<div class="a t" style="left:37px;top:385.76px;line-height:13px;font-size:10.8px;color:#000;width:116px;overflow:hidden;">Italic</div>
<svg class="a" style="left:237px;top:385px" width="13" height="13" viewBox="0 0 13 13"><rect x="0.6" y="0.6" width="11.8" height="11.8" rx="2.6" fill="#f4f4f4" stroke="#5c5c5c" stroke-width="1.1"/></svg>
<div class="a" style="left:7px;top:400px;width:14px;height:19px;background:#f0f0f0;"></div>
<div class="a" style="left:21px;top:400px;width:312px;height:1px;background:#a9a9a9;"></div>
<div class="a" style="left:154px;top:401px;width:1px;height:17px;background:#a9a9a9;"></div>
<div class="a" style="left:21px;top:401px;width:1px;height:18px;background:#a9a9a9;"></div>
<div class="a t" style="left:37px;top:403.76px;line-height:13px;font-size:10.8px;color:#000;width:116px;overflow:hidden;">Bold</div>
<svg class="a" style="left:237px;top:403px" width="13" height="13" viewBox="0 0 13 13"><rect x="0.6" y="0.6" width="11.8" height="11.8" rx="2.6" fill="#f4f4f4" stroke="#5c5c5c" stroke-width="1.1"/></svg>
<div class="a" style="left:7px;top:418px;width:14px;height:19px;background:#f0f0f0;"></div>
<div class="a" style="left:21px;top:418px;width:312px;height:1px;background:#a9a9a9;"></div>
<div class="a" style="left:154px;top:419px;width:1px;height:17px;background:#a9a9a9;"></div>
<div class="a" style="left:21px;top:419px;width:1px;height:18px;background:#a9a9a9;"></div>
<div class="a t" style="left:37px;top:421.76px;line-height:13px;font-size:10.8px;color:#000;width:116px;overflow:hidden;">Custom attributes</div>
<div class="a" style="left:7px;top:436px;width:326px;height:1px;background:#a9a9a9;"></div>
<div class="a" style="left:154px;top:437px;width:1px;height:18px;background:#a9a9a9;"></div>
<div class="a t" style="left:23px;top:439.76px;line-height:13px;font-size:10.8px;color:#000;width:130px;overflow:hidden;">Format</div>
<div class="a t" style="left:156px;top:439.76px;line-height:13px;font-size:10.8px;color:#000;">None</div>
<div class="a" style="left:7px;top:456px;width:326px;height:17px;background:#f0f0f0;"></div>
<svg class="a" style="left:11px;top:460px" width="9" height="9" viewBox="0 0 9 9"><defs><linearGradient id="eg" x1="0" y1="0" x2="0" y2="1"><stop offset="0" stop-color="#fff"/><stop offset="1" stop-color="#dcdcdc"/></linearGradient></defs><rect x="0.5" y="0.5" width="8" height="8" rx="1.2" fill="url(#eg)" stroke="#8a8a8a"/><path d="M2 4.5 H7" stroke="#3b5aa6" stroke-width="1"/></svg>
<div class="a t" style="left:24px;top:458.76px;line-height:13px;font-size:10.8px;color:#000;">Hyperlink</div>
<div class="a" style="left:7px;top:455px;width:326px;height:1px;background:#a9a9a9;"></div>
<div class="a" style="left:7px;top:473px;width:14px;height:20px;background:#f0f0f0;"></div>
<div class="a" style="left:21px;top:473px;width:312px;height:1px;background:#a9a9a9;"></div>
<div class="a" style="left:154px;top:474px;width:1px;height:18px;background:#a9a9a9;"></div>
<div class="a" style="left:21px;top:474px;width:1px;height:19px;background:#a9a9a9;"></div>
<div class="a t" style="left:37px;top:476.76px;line-height:13px;font-size:10.8px;color:#000;width:116px;overflow:hidden;">HREF field</div>
<div class="a" style="left:7px;top:492px;width:14px;height:19px;background:#f0f0f0;"></div>
<div class="a" style="left:21px;top:492px;width:312px;height:1px;background:#a9a9a9;"></div>
<div class="a" style="left:154px;top:493px;width:1px;height:17px;background:#a9a9a9;"></div>
<div class="a" style="left:21px;top:493px;width:1px;height:18px;background:#a9a9a9;"></div>
<div class="a t" style="left:37px;top:495.76px;line-height:13px;font-size:10.8px;color:#000;width:116px;overflow:hidden;">Original field value</div>
<svg class="a" style="left:237px;top:495px" width="13" height="13" viewBox="0 0 13 13"><rect x="0.6" y="0.6" width="11.8" height="11.8" rx="2.6" fill="#f4f4f4" stroke="#5c5c5c" stroke-width="1.1"/></svg>
<div class="a" style="left:7px;top:510px;width:14px;height:20px;background:#f0f0f0;"></div>
<div class="a" style="left:21px;top:510px;width:312px;height:1px;background:#a9a9a9;"></div>
<div class="a" style="left:154px;top:511px;width:1px;height:18px;background:#a9a9a9;"></div>
<div class="a" style="left:21px;top:511px;width:1px;height:19px;background:#a9a9a9;"></div>
<div class="a t" style="left:37px;top:513.76px;line-height:13px;font-size:10.8px;color:#000;width:116px;overflow:hidden;">Target</div>
<div class="a" style="left:7px;top:529px;width:14px;height:20px;background:#f0f0f0;"></div>
<div class="a" style="left:21px;top:529px;width:312px;height:1px;background:#a9a9a9;"></div>
<div class="a" style="left:154px;top:530px;width:1px;height:18px;background:#a9a9a9;"></div>
<div class="a" style="left:21px;top:530px;width:1px;height:19px;background:#a9a9a9;"></div>
<div class="a t" style="left:37px;top:532.76px;line-height:13px;font-size:10.8px;color:#000;width:116px;overflow:hidden;">Prefix</div>
<div class="a t" style="left:156px;top:532.76px;line-height:13px;font-size:10.8px;color:#000;">None</div>
<div class="a" style="left:7px;top:548px;width:14px;height:19px;background:#f0f0f0;"></div>
<div class="a" style="left:21px;top:548px;width:312px;height:1px;background:#a9a9a9;"></div>
<div class="a" style="left:154px;top:549px;width:1px;height:17px;background:#a9a9a9;"></div>
<div class="a" style="left:21px;top:549px;width:1px;height:18px;background:#a9a9a9;"></div>
<div class="a t" style="left:37px;top:551.76px;line-height:13px;font-size:10.8px;color:#000;width:116px;overflow:hidden;">Suffix</div>
<div class="a" style="left:7px;top:566px;width:14px;height:19px;background:#f0f0f0;"></div>
<div class="a" style="left:21px;top:566px;width:312px;height:1px;background:#a9a9a9;"></div>
<div class="a" style="left:154px;top:567px;width:1px;height:17px;background:#a9a9a9;"></div>
<div class="a" style="left:21px;top:567px;width:1px;height:18px;background:#a9a9a9;"></div>
<div class="a t" style="left:37px;top:569.76px;line-height:13px;font-size:10.8px;color:#000;width:116px;overflow:hidden;">Custom attributes</div>
<div class="a" style="left:7px;top:585px;width:326px;height:18px;background:#f0f0f0;"></div>
<svg class="a" style="left:11px;top:589px" width="9" height="9" viewBox="0 0 9 9"><defs><linearGradient id="eg" x1="0" y1="0" x2="0" y2="1"><stop offset="0" stop-color="#fff"/><stop offset="1" stop-color="#dcdcdc"/></linearGradient></defs><rect x="0.5" y="0.5" width="8" height="8" rx="1.2" fill="url(#eg)" stroke="#8a8a8a"/><path d="M2 4.5 H7" stroke="#3b5aa6" stroke-width="1"/></svg>
<div class="a t" style="left:24px;top:587.76px;line-height:13px;font-size:10.8px;color:#000;">Tooltip</div>
<div class="a" style="left:7px;top:584px;width:326px;height:1px;background:#a9a9a9;"></div>
<div class="a" style="left:7px;top:603px;width:14px;height:19px;background:#f0f0f0;"></div>
<div class="a" style="left:21px;top:603px;width:312px;height:1px;background:#a9a9a9;"></div>
<div class="a" style="left:154px;top:604px;width:1px;height:17px;background:#a9a9a9;"></div>
<div class="a" style="left:21px;top:604px;width:1px;height:18px;background:#a9a9a9;"></div>
<div class="a t" style="left:37px;top:606.76px;line-height:13px;font-size:10.8px;color:#000;width:116px;overflow:hidden;">Tooltip field</div>
<div class="a" style="left:7px;top:621px;width:14px;height:20px;background:#f0f0f0;"></div>
<div class="a" style="left:21px;top:621px;width:312px;height:1px;background:#a9a9a9;"></div>
<div class="a" style="left:154px;top:622px;width:1px;height:18px;background:#a9a9a9;"></div>
<div class="a" style="left:21px;top:622px;width:1px;height:19px;background:#a9a9a9;"></div>
<div class="a t" style="left:37px;top:624.76px;line-height:13px;font-size:10.8px;color:#000;width:116px;overflow:hidden;">Tooltip width</div>
<div class="a t" style="left:156px;top:624.76px;line-height:13px;font-size:10.8px;color:#000;">0</div>
<div class="a" style="left:7px;top:640px;width:326px;height:1px;background:#a9a9a9;"></div>
<div class="a" style="left:7px;top:659px;width:326px;height:1px;background:#a9a9a9;"></div>
<div class="a" style="left:154px;top:641px;width:1px;height:18px;background:#a9a9a9;"></div>
<div class="a t" style="left:23px;top:643.76px;line-height:13px;font-size:10.8px;color:#000;width:130px;overflow:hidden;">Custom View Tag</div>
<div class="a" style="left:7px;top:345px;width:326px;height:1px;background:#d0d0d0;"></div>
<div class="a" style="left:7px;top:345px;width:1px;height:346px;background:#d0d0d0;"></div>
<div class="a" style="left:338px;top:344px;width:353px;height:348px;background:#ffffff;box-sizing:border-box;border:1px solid #a0a0a0;"></div>
<div class="a" style="left:339px;top:345px;width:351px;height:18px;background:#f0f0f0;"></div>
<svg class="a" style="left:343px;top:350px" width="9" height="9" viewBox="0 0 9 9"><defs><linearGradient id="eg" x1="0" y1="0" x2="0" y2="1"><stop offset="0" stop-color="#fff"/><stop offset="1" stop-color="#dcdcdc"/></linearGradient></defs><rect x="0.5" y="0.5" width="8" height="8" rx="1.2" fill="url(#eg)" stroke="#8a8a8a"/><path d="M2 4.5 H7" stroke="#3b5aa6" stroke-width="1"/></svg>
<div class="a t" style="left:356px;top:348.76px;line-height:13px;font-size:10.8px;color:#000;">INPUT Tag</div>
<div class="a" style="left:356px;top:347px;width:54px;height:13px;border:1px dotted #000;"></div>
<div class="a" style="left:339px;top:363px;width:14px;height:20px;background:#f0f0f0;"></div>
<div class="a" style="left:353px;top:363px;width:337px;height:1px;background:#a9a9a9;"></div>
<div class="a" style="left:476px;top:364px;width:1px;height:18px;background:#a9a9a9;"></div>
<div class="a" style="left:353px;top:364px;width:1px;height:19px;background:#a9a9a9;"></div>
<div class="a t" style="left:369px;top:366.76px;line-height:13px;font-size:10.8px;color:#000;width:106px;overflow:hidden;">Type</div>
<div class="a t" style="left:478px;top:366.76px;line-height:13px;font-size:10.8px;color:#000;">text</div>
<div class="a" style="left:339px;top:382px;width:14px;height:19px;background:#f0f0f0;"></div>
<div class="a" style="left:353px;top:382px;width:337px;height:1px;background:#a9a9a9;"></div>
<div class="a" style="left:476px;top:383px;width:1px;height:17px;background:#a9a9a9;"></div>
<div class="a" style="left:353px;top:383px;width:1px;height:18px;background:#a9a9a9;"></div>
<div class="a t" style="left:369px;top:385.76px;line-height:13px;font-size:10.8px;color:#000;width:106px;overflow:hidden;">Size</div>
<div class="a t" style="left:478px;top:385.76px;line-height:13px;font-size:10.8px;color:#000;">30</div>
<div class="a" style="left:339px;top:400px;width:14px;height:19px;background:#f0f0f0;"></div>
<div class="a" style="left:353px;top:400px;width:337px;height:1px;background:#a9a9a9;"></div>
<div class="a" style="left:476px;top:401px;width:1px;height:17px;background:#a9a9a9;"></div>
<div class="a" style="left:353px;top:401px;width:1px;height:18px;background:#a9a9a9;"></div>
<div class="a t" style="left:369px;top:403.76px;line-height:13px;font-size:10.8px;color:#000;width:106px;overflow:hidden;">Maxlength</div>
<div class="a t" style="left:478px;top:403.76px;line-height:13px;font-size:10.8px;color:#000;">15</div>
<div class="a" style="left:339px;top:418px;width:14px;height:19px;background:#f0f0f0;"></div>
<div class="a" style="left:353px;top:418px;width:337px;height:1px;background:#a9a9a9;"></div>
<div class="a" style="left:476px;top:419px;width:1px;height:17px;background:#a9a9a9;"></div>
<div class="a" style="left:353px;top:419px;width:1px;height:18px;background:#a9a9a9;"></div>
<div class="a t" style="left:369px;top:421.76px;line-height:13px;font-size:10.8px;color:#000;width:106px;overflow:hidden;">Step</div>
<div class="a" style="left:339px;top:436px;width:351px;height:1px;background:#a9a9a9;"></div>
<div class="a" style="left:476px;top:437px;width:1px;height:18px;background:#a9a9a9;"></div>
<div class="a t" style="left:355px;top:439.76px;line-height:13px;font-size:10.8px;color:#000;width:120px;overflow:hidden;">Custom attributes</div>
<div class="a" style="left:339px;top:455px;width:351px;height:1px;background:#a9a9a9;"></div>
<div class="a" style="left:476px;top:456px;width:1px;height:17px;background:#a9a9a9;"></div>
<div class="a t" style="left:355px;top:458.76px;line-height:13px;font-size:10.8px;color:#000;width:120px;overflow:hidden;">Client side events</div>
<div class="a" style="left:339px;top:473px;width:351px;height:1px;background:#a9a9a9;"></div>
<div class="a" style="left:476px;top:474px;width:1px;height:17px;background:#a9a9a9;"></div>
<div class="a t" style="left:355px;top:476.76px;line-height:13px;font-size:10.8px;color:#000;width:120px;overflow:hidden;">Use lookup table</div>
<svg class="a" style="left:577px;top:476px" width="13" height="13" viewBox="0 0 13 13"><rect x="0.6" y="0.6" width="11.8" height="11.8" rx="2.6" fill="#f4f4f4" stroke="#5c5c5c" stroke-width="1.1"/></svg>
<div class="a" style="left:339px;top:491px;width:351px;height:1px;background:#a9a9a9;"></div>
<div class="a" style="left:476px;top:492px;width:1px;height:17px;background:#a9a9a9;"></div>
<div class="a t" style="left:355px;top:494.76px;line-height:13px;font-size:10.8px;color:#000;width:120px;overflow:hidden;">Use modal dialog for lookup</div>
<svg class="a" style="left:577px;top:494px" width="13" height="13" viewBox="0 0 13 13"><rect x="0.6" y="0.6" width="11.8" height="11.8" rx="2.6" fill="#f4f4f4" stroke="#5c5c5c" stroke-width="1.1"/></svg>
<div class="a" style="left:339px;top:509px;width:351px;height:1px;background:#a9a9a9;"></div>
<div class="a" style="left:476px;top:510px;width:1px;height:18px;background:#a9a9a9;"></div>
<div class="a t" style="left:355px;top:512.76px;line-height:13px;font-size:10.8px;color:#000;width:120px;overflow:hidden;">Lookup page size</div>
<div class="a t" style="left:478px;top:512.76px;line-height:13px;font-size:10.8px;color:#000;">0</div>
<div class="a" style="left:339px;top:528px;width:351px;height:1px;background:#a9a9a9;"></div>
<div class="a" style="left:476px;top:529px;width:1px;height:17px;background:#a9a9a9;"></div>
<div class="a t" style="left:355px;top:531.76px;line-height:13px;font-size:10.8px;color:#000;width:120px;overflow:hidden;">Force selection</div>
<svg class="a" style="left:577px;top:531px" width="13" height="13" viewBox="0 0 13 13"><rect x="0.6" y="0.6" width="11.8" height="11.8" rx="2.6" fill="#f4f4f4" stroke="#5c5c5c" stroke-width="1.1"/></svg>
<div class="a" style="left:339px;top:546px;width:351px;height:1px;background:#a9a9a9;"></div>
<div class="a" style="left:476px;top:547px;width:1px;height:18px;background:#a9a9a9;"></div>
<div class="a t" style="left:355px;top:549.76px;line-height:13px;font-size:10.8px;color:#000;width:120px;overflow:hidden;">Dropdown min-width (px)</div>
<div class="a t" style="left:478px;top:549.76px;line-height:13px;font-size:10.8px;color:#000;">0</div>
<div class="a" style="left:339px;top:565px;width:351px;height:1px;background:#a9a9a9;"></div>
<div class="a" style="left:476px;top:566px;width:1px;height:18px;background:#a9a9a9;"></div>
<div class="a t" style="left:355px;top:568.76px;line-height:13px;font-size:10.8px;color:#000;width:120px;overflow:hidden;">Dropdown max-height (px)</div>
<div class="a t" style="left:478px;top:568.76px;line-height:13px;font-size:10.8px;color:#000;">0</div>
<div class="a" style="left:339px;top:584px;width:351px;height:1px;background:#a9a9a9;"></div>
<div class="a" style="left:476px;top:585px;width:1px;height:18px;background:#a9a9a9;"></div>
<div class="a t" style="left:355px;top:587.76px;line-height:13px;font-size:10.8px;color:#000;width:120px;overflow:hidden;">Option template</div>
<div class="a" style="left:339px;top:603px;width:351px;height:1px;background:#a9a9a9;"></div>
<div class="a" style="left:476px;top:604px;width:1px;height:17px;background:#a9a9a9;"></div>
<div class="a t" style="left:355px;top:606.76px;line-height:13px;font-size:10.8px;color:#000;width:120px;overflow:hidden;">Check duplicate</div>
<svg class="a" style="left:577px;top:606px" width="13" height="13" viewBox="0 0 13 13"><rect x="0.6" y="0.6" width="11.8" height="11.8" rx="2.6" fill="#f4f4f4" stroke="#5c5c5c" stroke-width="1.1"/></svg>
<div class="a" style="left:339px;top:621px;width:351px;height:1px;background:#a9a9a9;"></div>
<div class="a" style="left:476px;top:622px;width:1px;height:19px;background:#a9a9a9;"></div>
<div class="a t" style="left:355px;top:624.76px;line-height:13px;font-size:10.8px;color:#000;width:120px;overflow:hidden;">Custom message</div>
<div class="a" style="left:339px;top:642px;width:351px;height:17px;background:#f0f0f0;"></div>
<svg class="a" style="left:343px;top:646px" width="9" height="9" viewBox="0 0 9 9"><defs><linearGradient id="eg" x1="0" y1="0" x2="0" y2="1"><stop offset="0" stop-color="#fff"/><stop offset="1" stop-color="#dcdcdc"/></linearGradient></defs><rect x="0.5" y="0.5" width="8" height="8" rx="1.2" fill="url(#eg)" stroke="#8a8a8a"/><path d="M2 4.5 H7" stroke="#3b5aa6" stroke-width="1"/></svg>
<div class="a t" style="left:356px;top:644.76px;line-height:13px;font-size:10.8px;color:#000;">Validation</div>
<div class="a" style="left:339px;top:641px;width:351px;height:1px;background:#a9a9a9;"></div>
<div class="a" style="left:339px;top:659px;width:14px;height:20px;background:#f0f0f0;"></div>
<div class="a" style="left:353px;top:659px;width:337px;height:1px;background:#a9a9a9;"></div>
<div class="a" style="left:476px;top:660px;width:1px;height:18px;background:#a9a9a9;"></div>
<div class="a" style="left:353px;top:660px;width:1px;height:19px;background:#a9a9a9;"></div>
<div class="a t" style="left:369px;top:662.76px;line-height:13px;font-size:10.8px;color:#000;width:106px;overflow:hidden;">Validate</div>
<div class="a t" style="left:478px;top:662.76px;line-height:13px;font-size:10.8px;color:#000;">(None)</div>
<div class="a" style="left:339px;top:678px;width:14px;height:13px;background:#f0f0f0;"></div>
<div class="a" style="left:353px;top:678px;width:337px;height:1px;background:#a9a9a9;"></div>
<div class="a" style="left:476px;top:679px;width:1px;height:12px;background:#a9a9a9;"></div>
<div class="a" style="left:353px;top:679px;width:1px;height:12px;background:#a9a9a9;"></div>
<div class="a t" style="left:369px;top:681.76px;line-height:13px;font-size:10.8px;color:#000;width:106px;overflow:hidden;">Required</div>
<svg class="a" style="left:577px;top:681px" width="13" height="13" viewBox="0 0 13 13"><rect x="0.6" y="0.6" width="11.8" height="11.8" rx="2.6" fill="#f4f4f4" stroke="#5c5c5c" stroke-width="1.1"/></svg>
<div class="a" style="left:339px;top:345px;width:351px;height:1px;background:#d0d0d0;"></div>
<div class="a" style="left:339px;top:345px;width:1px;height:346px;background:#d0d0d0;"></div>
<div class="a" style="left:338px;top:691px;width:353px;height:1px;background:#a0a0a0;"></div>
<div class="a" style="left:338px;top:692px;width:353px;height:1px;background:#cce4f7;"></div>
<div class="a" style="left:1px;top:693px;width:969px;height:3px;background:#f8f8f8;"></div>
<div class="a" style="left:0px;top:696px;width:971px;height:1px;background:#e6e6e6;"></div>
<div class="a" style="left:0px;top:697px;width:972px;height:1px;background:#f0f0f0;"></div>
<div class="a" style="left:695px;top:344px;width:271px;height:348px;background:#ffffff;box-sizing:border-box;border:1px solid #7d828c;"></div>
<div class="a t" style="left:698px;top:348.76px;line-height:13px;font-size:10.8px;color:#000;">Value</div>
<div class="a" style="left:830px;top:346px;width:1px;height:17px;background:#e6e6e6;"></div>
<div class="a t" style="left:833px;top:348.76px;line-height:13px;font-size:10.8px;color:#000;">Label</div>
<div class="a" style="left:6px;top:320px;width:24px;height:23px;background:#cce8ff;box-sizing:border-box;border:1px solid #99d1ff;border-radius:3px;"></div>
<svg class="a" style="left:10px;top:324px" width="18" height="17" viewBox="0 0 18 17"><path d="M1 7 L3 1 L5 7 M1.8 5 H4.2" stroke="#333" stroke-width="1.3" fill="none"/><path d="M5 14 L12 3 L14 3 L15 14 M7.5 10.5 H14" stroke="#2a3fb0" stroke-width="1.8" fill="none"/><path d="M5 15.8 H17" stroke="#2a3fb0" stroke-width="1.4"/></svg>
<svg class="a" style="left:35px;top:325px" width="14" height="14" viewBox="0 0 14 14"><rect x="0.5" y="0.5" width="13" height="13" fill="#f4f8ff" stroke="#5a7ab0"/><path d="M1 13 L6 6.5 L9 9 L13 12.5 V13Z" fill="#7cc060"/><path d="M6 6.5 L13 12.5" stroke="#555" stroke-width="0.8"/><circle cx="9.5" cy="3.8" r="2" fill="#f08a40"/></svg>
<div class="a" style="left:338px;top:320px;width:24px;height:23px;background:#cce8ff;box-sizing:border-box;border:1px solid #99d1ff;border-radius:3px;"></div>
<svg class="a" style="left:344px;top:327px" width="15" height="13" viewBox="0 0 15 13"><rect x="0.5" y="0.5" width="14" height="12" fill="#fff" stroke="#4a5a72"/><text x="1.6" y="10" font-family="Liberation Sans" font-size="8.6" textLength="11.5" lengthAdjust="spacingAndGlyphs" fill="#000" stroke="#000" stroke-width="0.3">abl</text></svg>
<svg class="a" style="left:367px;top:328px" width="15" height="9" viewBox="0 0 15 9"><rect x="0.5" y="0.5" width="14" height="8" fill="#fff" stroke="#9ab0cc"/><path d="M4.5 1.5 V7.5 M2 2.8 L7 6.2 M7 2.8 L2 6.2 M10.5 1.5 V7.5 M8 2.8 L13 6.2 M13 2.8 L8 6.2" stroke="#8094b0" stroke-width="1"/></svg>
<svg class="a" style="left:392px;top:326px" width="13" height="13" viewBox="0 0 13 13"><circle cx="6.5" cy="6.5" r="6" fill="#f6f6f6" stroke="#5a7090"/><path d="M6.5 3.8 L9.2 6.5 L6.5 9.2 L3.8 6.5Z" fill="#50b850"/></svg>
<svg class="a" style="left:416px;top:326px" width="13" height="13" viewBox="0 0 13 13"><rect x="0.5" y="0.5" width="12" height="12" fill="#f4f4f4" stroke="#4a6a90"/><path d="M3 6.5 L5.5 9 L10.5 3.5" stroke="#30a030" stroke-width="1.8" fill="none"/></svg>
<svg class="a" style="left:438px;top:325px" width="16" height="14" viewBox="0 0 16 14"><rect x="0.5" y="0.5" width="15" height="3" fill="#fff" stroke="#5a7ab0"/><path d="M12 1.5 L14 1.5 L13 3Z" fill="#5a7ab0"/><rect x="1.5" y="3.5" width="14" height="10" fill="#fff" stroke="#8aa0c0"/><rect x="10" y="4" width="5" height="9" fill="#d8e4f4"/><path d="M3 7.5 H8 M3 10 H7" stroke="#222" stroke-width="1"/><path d="M11 7 L12.5 5.5 L14 7 M11 10 L12.5 11.5 L14 10" stroke="#333" stroke-width="0.8" fill="none"/></svg>
<svg class="a" style="left:463px;top:325px" width="15" height="15" viewBox="0 0 15 15"><rect x="0.5" y="0.5" width="14" height="14" fill="#fffbe8" stroke="#6a82a8"/><rect x="11" y="1" width="3" height="13" fill="#dfe8f4"/><rect x="1" y="11" width="13" height="3" fill="#dfe8f4"/><text x="1.8" y="6" font-family="Liberation Sans" font-size="5.5" fill="#3a5a9a">a b</text><text x="1.8" y="10.5" font-family="Liberation Sans" font-size="5.5" fill="#3a5a9a">c d</text></svg>
<svg class="a" style="left:487px;top:324px" width="15" height="16" viewBox="0 0 15 16"><path d="M6.5 5.5 H14.5 V15.5 H6.5Z" fill="#f4f7fc" stroke="#7a8aa8"/><path d="M8 9 H13 M8 11 H13 M8 13 H13" stroke="#a0b0c8"/><path d="M3 12 V3.5 M0.5 5 L3 1.5 L5.5 5 M3 8 H7" stroke="#2a70d0" stroke-width="2" fill="none"/></svg>
<svg class="a" style="left:511px;top:326px" width="14" height="12" viewBox="0 0 14 12"><rect x="0.5" y="0.5" width="13" height="11" fill="#fff" stroke="#777" stroke-dasharray="1.5 1"/><text x="2.2" y="9" font-family="Liberation Sans" font-size="8.5" fill="#333">ab</text></svg>
<svg class="a" style="left:700px;top:325px" width="14" height="14" viewBox="0 0 14 14"><path d="M5.5 0.5 H8.5 V5.5 H13.5 V8.5 H8.5 V13.5 H5.5 V8.5 H0.5 V5.5 H5.5Z" fill="#8ee070" stroke="#3c9c2a" stroke-width="1"/></svg>
<svg class="a" style="left:724px;top:329px" width="14" height="6" viewBox="0 0 14 6"><rect x="0.5" y="1" width="13" height="4" rx="2" fill="#f07a5a" stroke="#c84a30" stroke-width="0.8"/></svg>
<svg class="a" style="left:750px;top:328px" width="11" height="10" viewBox="0 0 11 10"><path d="M5.5 0.5 L10.5 5 H7.5 V9.5 H3.5 V5 H0.5Z" fill="#6aa8f0" stroke="#3a78c8" stroke-width="0.7"/></svg>
<svg class="a" style="left:774px;top:328px" width="11" height="10" viewBox="0 0 11 10"><path d="M5.5 9.5 L10.5 5 H7.5 V0.5 H3.5 V5 H0.5Z" fill="#6aa8f0" stroke="#3a78c8" stroke-width="0.7"/></svg>
<div class="a" style="left:793px;top:322px;width:1px;height:20px;background:#6a6a6a;"></div>
<svg class="a" style="left:799px;top:323px" width="18" height="17" viewBox="0 0 18 17"><text x="0.3" y="9.5" font-family="Liberation Serif" font-size="12" fill="#707070">a</text><path d="M6.5 3 Q9 0.3 11.8 2.2 V5.5" stroke="#2a4a8a" stroke-width="1" fill="none"/><path d="M10.2 4.8 L11.8 6.8 L13.4 4.8Z" fill="#2a4a8a"/><g transform="translate(7.2,7) scale(0.9)"><path d="M1.2 2.6 L8.3 2.1 M4.2 0.6 Q3.9 5 5.6 9 M7 4.2 Q5.2 8.8 2.6 8.8 Q0.9 8.8 1.3 7 Q2.2 5.1 5.8 5 Q9.2 5 9 7.3 Q8.7 9.4 6.2 9.7" stroke="#333" stroke-width="1.45" fill="none" stroke-linecap="round"/></g></svg>
</body></html>
